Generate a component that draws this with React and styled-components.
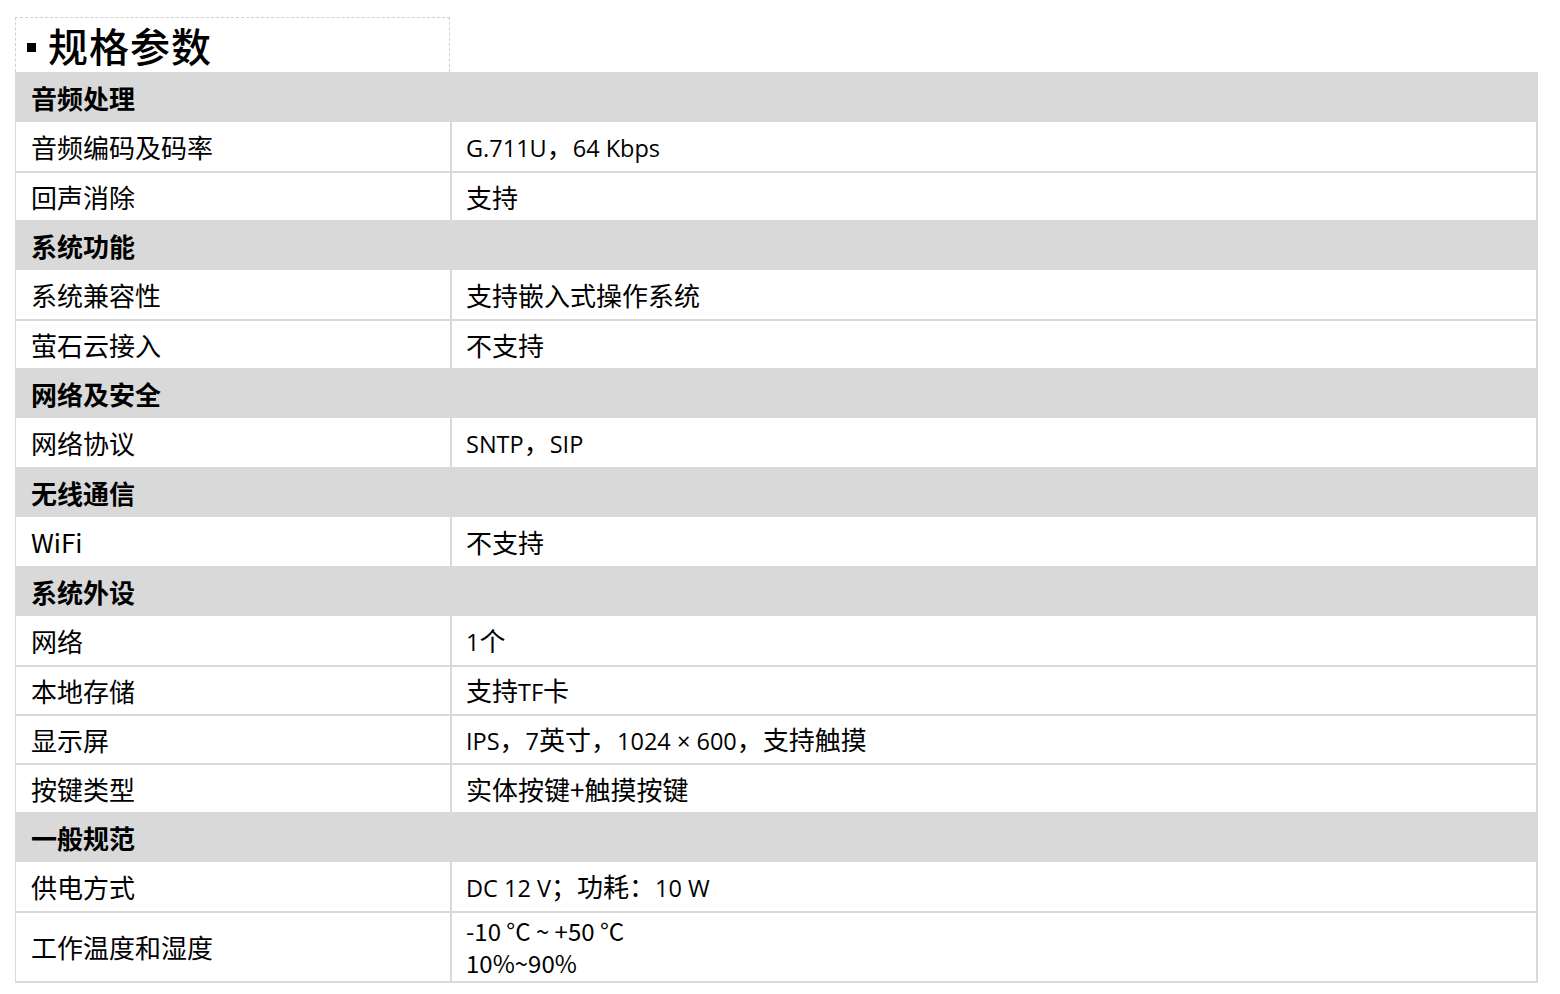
import React from 'react';
import styled, { createGlobalStyle } from 'styled-components';

const Global = createGlobalStyle`
    body {
        margin: 0;
        background: #ffffff;
        font-family: "Noto Sans CJK SC", sans-serif;
        color: #000;
    }
`;

const Page = styled.div`
    padding: 17px 22px 0 15px;
`;

const TitleBox = styled.div`
    width: 435px;
    height: 55px;
    box-sizing: border-box;
    border: 1px dashed #cfcfcf;
    border-bottom: none;
    display: flex;
    align-items: center;
    gap: 12px;
    padding-left: 11px;
`;

const Bullet = styled.span`
    width: 9px;
    height: 9px;
    background: #000;
    margin-top: 4px;
`;

const Title = styled.h1`
    margin: 0;
    font-size: 40px;
    font-weight: 500;
    line-height: 1;
    letter-spacing: 1px;
`;

const Table = styled.div`
    display: grid;
    grid-template-columns: 434px 1fr;
    border-left: 1px solid #d9d9d9;
    border-right: 2px solid #d9d9d9;
    border-bottom: 2px solid #d9d9d9;
`;

const Section = styled.div`
    grid-column: 1 / -1;
    height: 50px;
    background: #d9d9d9;
    display: flex;
    align-items: center;
    padding-left: 15px;
    font-size: 26px;
    font-weight: 700;
`;

const Cell = styled.div`
    height: ${p => p.h}px;
    box-sizing: border-box;
    display: flex;
    flex-direction: column;
    justify-content: center;
    padding-left: ${p => (p.value ? 14 : 15)}px;
    border-top: ${p => (p.first ? 'none' : '2px solid #d9d9d9')};
    border-left: ${p => (p.value ? '2px solid #d9d9d9' : 'none')};
    font-size: ${p => (p.small ? 24 : 26)}px;
    line-height: ${p => (p.small ? 32 : 34)}px;
    white-space: nowrap;
`;

const Latin = styled.span`
    font-family: "Open Sans", sans-serif;
    font-size: 23.5px;
`;

const Line = styled.span`
    display: block;
`;

const Mixed = ({ text }) => (
    <Line>
        {text.split(/([A-Za-z0-9.× ]+)/).map((part, i) =>
            i % 2 ? <Latin key={i}>{part}</Latin> : part
        )}
    </Line>
);

const spec = [
    { title: '音频处理', rows: [['音频编码及码率', 'G.711U，64 Kbps'], ['回声消除', '支持']] },
    { title: '系统功能', rows: [['系统兼容性', '支持嵌入式操作系统'], ['萤石云接入', '不支持']] },
    { title: '网络及安全', rows: [['网络协议', 'SNTP，SIP']] },
    { title: '无线通信', rows: [['WiFi', '不支持']] },
    {
        title: '系统外设',
        rows: [
            ['网络', '1个'],
            ['本地存储', '支持TF卡'],
            ['显示屏', 'IPS，7英寸，1024 × 600，支持触摸'],
            ['按键类型', '实体按键+触摸按键'],
        ],
    },
    {
        title: '一般规范',
        rows: [
            ['供电方式', 'DC 12 V；功耗：10 W'],
            ['工作温度和湿度', ['-10 °C ~ +50 °C', '10%~90%'], 70],
        ],
    },
];

const App = () => (
    <Page>
        <Global />
        <TitleBox>
            <Bullet />
            <Title>规格参数</Title>
        </TitleBox>
        <Table>
            {spec.map(group => (
                <React.Fragment key={group.title}>
                    <Section>{group.title}</Section>
                    {group.rows.map(([label, value, h], i) => (
                        <React.Fragment key={label}>
                            <Cell h={h || 49} first={i === 0}>{label}</Cell>
                            <Cell h={h || 49} first={i === 0} value small={Array.isArray(value)}>
                                {Array.isArray(value)
                                    ? value.map(v => <Line key={v}>{v}</Line>)
                                    : <Mixed text={value} />}
                            </Cell>
                        </React.Fragment>
                    ))}
                </React.Fragment>
            ))}
        </Table>
    </Page>
);

export default App;
